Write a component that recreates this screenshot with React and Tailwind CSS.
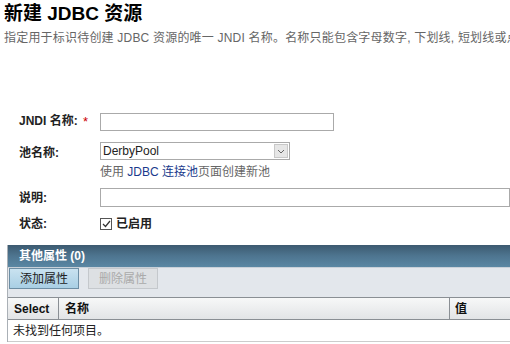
import React from 'react';

const font = { fontFamily: '"Liberation Sans", "Noto Sans CJK SC", sans-serif' };

const Label = ({ children }) => (
  <div className="w-[81px] shrink-0 text-[12px] font-bold text-[#222]">{children}</div>
);

export default function App() {
  return (
    <div className="w-[510px] h-[344px] overflow-hidden bg-white text-[#333]" style={font}>
      <div className="pl-[4px] pt-[2px]">
        <h1 className="text-[19px] font-bold leading-[24px] text-black">新建 JDBC 资源</h1>
        <p className="mt-[4px] text-[12px] leading-[16px] text-[#666] whitespace-nowrap tracking-[0.2px]">
          指定用于标识待创建 JDBC 资源的唯一 JNDI 名称。名称只能包含字母数字, 下划线, 短划线或点字符。
        </p>
      </div>

      <div className="mt-[67px] pl-[19px] flex flex-col">
        <div className="flex items-center h-[18px]">
          <Label>
            JNDI 名称: <span className="text-[#c00] font-normal align-top text-[13px] ml-[2px]">*</span>
          </Label>
          <div className="w-[234px] h-[18px] border border-[#aaa] bg-white" />
        </div>

        <div className="flex mt-[11px]">
          <Label><div className="pt-[2px]">池名称:</div></Label>
          <div className="flex flex-col">
            <div className="flex w-[190px] h-[18px] border border-[#aaa] bg-white items-center">
              <span className="flex-1 pl-[2px] text-[12px] text-[#222]">DerbyPool</span>
              <div className="w-[14px] h-[14px] mr-[1px] bg-[#e6e6e6] border border-[#c8c8c8] flex items-center justify-center">
                <svg width="8" height="5" viewBox="0 0 8 5">
                  <path d="M1 1 L4 4 L7 1" fill="none" stroke="#666" strokeWidth="1" />
                </svg>
              </div>
            </div>
            <div className="mt-[4px] h-[16px] text-[12px] leading-[16px] text-[#666]">
              使用 <span className="text-[#1a3a8c]">JDBC 连接池</span>页面创建新池
            </div>
          </div>
        </div>

        <div className="flex items-center mt-[8px] h-[19px]">
          <Label>说明:</Label>
          <div className="w-[410px] h-[19px] border border-[#aaa] bg-white" />
        </div>

        <div className="flex items-center mt-[9px] h-[16px]">
          <Label>状态:</Label>
          <div className="flex items-center gap-[4px]">
            <div className="w-[12px] h-[12px] border border-[#555] bg-white flex items-center justify-center">
              <svg width="9" height="8" viewBox="0 0 9 8">
                <path d="M1 4 L3.5 6.5 L8 1" fill="none" stroke="#333" strokeWidth="1.2" />
              </svg>
            </div>
            <span className="text-[12px] font-bold text-[#222]">已启用</span>
          </div>
        </div>
      </div>

      <div className="mt-[13px] ml-[7px] border-l border-[#aab0b6]">
        <div className="h-[22px] bg-gradient-to-b from-[#3c5a70] via-[#4e7590] to-[#5a87a3] flex items-center pl-[11px]">
          <span className="text-[12px] font-bold text-white">其他属性 (0)</span>
        </div>
        <div className="h-[30px] bg-[#e3e7ec] border-t border-[#c8d0d8] flex items-start gap-[9px] pl-[1px]">
          <button className="w-[70px] h-[21px] text-[12px] text-[#222] bg-gradient-to-b from-[#c9e2f0] to-[#a9cfe4] border border-[#6d8ea4]">
            添加属性
          </button>
          <button className="w-[70px] h-[21px] text-[12px] text-[#aaa] bg-[#dde0e3] border border-[#c4c8cc]">
            删除属性
          </button>
        </div>
        <div className="h-[23px] flex border-t border-b border-[#8a8f94] bg-gradient-to-b from-[#f7f8f8] to-[#e2e4e6] text-[12px] font-bold text-[#111]">
          <div className="w-[51px] pl-[6px] flex items-center border-r border-[#8a8f94]">Select</div>
          <div className="w-[391px] pl-[6px] flex items-center border-r border-[#8a8f94]">名称</div>
          <div className="flex-1 pl-[5px] flex items-center">值</div>
        </div>
        <div className="h-[22px] flex items-center pl-[5px] text-[12px] text-[#222] border-b border-[#ccc]">
          未找到任何项目。
        </div>
      </div>
    </div>
  );
}
